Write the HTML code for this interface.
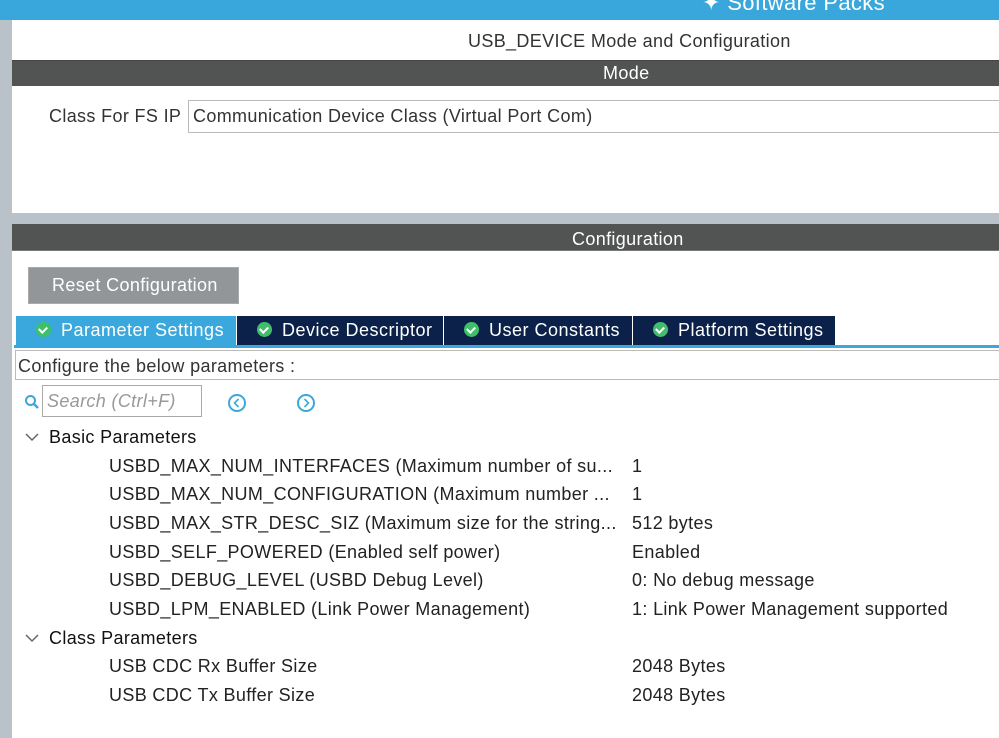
<html><head><style>
body{margin:0;width:999px;height:738px;overflow:hidden;background:#fff;font-family:"Liberation Sans",sans-serif;color:#222;position:relative}
div{position:absolute;box-sizing:border-box}
.t{white-space:nowrap;font-size:18px;letter-spacing:0.35px}
.tab{top:316px;height:29px;color:#fff;font-size:18px;letter-spacing:0.5px;line-height:29px;padding-left:20px;white-space:nowrap}
.tab i{display:inline-block;width:15px;height:15px;border-radius:50%;background:#3fbf6a;vertical-align:-1px;margin-right:10px;position:relative}
.tab i:after{content:"";position:absolute;left:4px;top:3px;width:4px;height:6px;border:solid #fff;border-width:0 2px 2px 0;transform:rotate(45deg)}
</style></head><body>
<div style="left:0;top:0;width:999px;height:20px;background:#39a7db"></div>
<div class="t" style="left:702px;top:-10px;color:#fff;font-size:22px">✦ Software Packs</div>
<div style="left:0;top:20px;width:12px;height:718px;background:#b8c2c8"></div>
<div class="t" style="left:468px;top:31px;color:#333">USB_DEVICE Mode and Configuration</div>
<div style="left:12px;top:60px;width:987px;height:26px;background:#525453;border-top:1px solid #444"></div>
<div class="t" style="left:603px;top:63px;color:#fff">Mode</div>
<div class="t" style="left:49px;top:106px;color:#333">Class For FS IP</div>
<div style="left:188px;top:100px;width:820px;height:33px;border:1px solid #bbb"></div>
<div class="t" style="left:193px;top:106px;color:#333">Communication Device Class (Virtual Port Com)</div>
<div style="left:12px;top:213px;width:987px;height:11px;background:#b8c2c8"></div>
<div style="left:12px;top:224px;width:987px;height:27px;background:#525453;border-bottom:1px solid #777"></div>
<div class="t" style="left:572px;top:229px;color:#fff">Configuration</div>
<div style="left:28px;top:267px;width:211px;height:37px;background:#929699;border:1px solid #aaa"></div>
<div class="t" style="left:52px;top:275px;color:#fff;font-size:18px">Reset Configuration</div>
<div class="tab" style="left:16px;width:220px;background:#3aa8dc"><i></i>Parameter Settings</div>
<div class="tab" style="left:237px;width:206px;background:#0b2149"><i></i>Device Descriptor</div>
<div class="tab" style="left:444px;width:188px;background:#0b2149"><i></i>User Constants</div>
<div class="tab" style="left:633px;width:202px;background:#0b2149"><i></i>Platform Settings</div>
<div style="left:14px;top:345px;width:985px;height:3px;background:#3aa8dc"></div>
<div style="left:15px;top:350px;width:990px;height:30px;border:1px solid #bbb"></div>
<div class="t" style="left:18px;top:356px;color:#333">Configure the below parameters :</div>
<svg style="position:absolute;left:24px;top:394px" width="16" height="16"><circle cx="6.5" cy="6.5" r="4.5" fill="none" stroke="#3aa8dc" stroke-width="2"/><line x1="10" y1="10" x2="14" y2="14" stroke="#3aa8dc" stroke-width="2.5"/></svg>
<div style="left:42px;top:385px;width:160px;height:32px;border:1px solid #aaa"></div>
<div class="t" style="left:47px;top:391px;color:#999;font-style:italic">Search (Ctrl+F)</div>
<svg style="position:absolute;left:227px;top:393px" width="20" height="20"><circle cx="10" cy="10" r="8" fill="none" stroke="#3aa8dc" stroke-width="2"/><path d="M11.5 6 L7.5 10 L11.5 14" fill="none" stroke="#3aa8dc" stroke-width="1.6"/></svg>
<svg style="position:absolute;left:296px;top:393px" width="20" height="20"><circle cx="10" cy="10" r="8" fill="none" stroke="#3aa8dc" stroke-width="2"/><path d="M8.5 6 L12.5 10 L8.5 14" fill="none" stroke="#3aa8dc" stroke-width="1.6"/></svg>
<svg style="position:absolute;left:24px;top:431px" width="16" height="12"><path d="M2 3 L8 9 L14 3" fill="none" stroke="#666" stroke-width="1.5"/></svg>
<div class="t" style="left:49px;top:427px;color:#111">Basic Parameters</div>
<div class="t" style="left:109px;top:456px">USBD_MAX_NUM_INTERFACES (Maximum number of su...</div><div class="t" style="left:632px;top:456px">1</div>
<div class="t" style="left:109px;top:484px">USBD_MAX_NUM_CONFIGURATION (Maximum number ...</div><div class="t" style="left:632px;top:484px">1</div>
<div class="t" style="left:109px;top:513px">USBD_MAX_STR_DESC_SIZ (Maximum size for the string...</div><div class="t" style="left:632px;top:513px">512 bytes</div>
<div class="t" style="left:109px;top:542px">USBD_SELF_POWERED (Enabled self power)</div><div class="t" style="left:632px;top:542px">Enabled</div>
<div class="t" style="left:109px;top:570px">USBD_DEBUG_LEVEL (USBD Debug Level)</div><div class="t" style="left:632px;top:570px">0: No debug message</div>
<div class="t" style="left:109px;top:599px">USBD_LPM_ENABLED (Link Power Management)</div><div class="t" style="left:632px;top:599px">1: Link Power Management supported</div>
<svg style="position:absolute;left:24px;top:632px" width="16" height="12"><path d="M2 3 L8 9 L14 3" fill="none" stroke="#666" stroke-width="1.5"/></svg>
<div class="t" style="left:49px;top:628px;color:#111">Class Parameters</div>
<div class="t" style="left:109px;top:656px">USB CDC Rx Buffer Size</div><div class="t" style="left:632px;top:656px">2048 Bytes</div>
<div class="t" style="left:109px;top:685px">USB CDC Tx Buffer Size</div><div class="t" style="left:632px;top:685px">2048 Bytes</div>
</body></html>
